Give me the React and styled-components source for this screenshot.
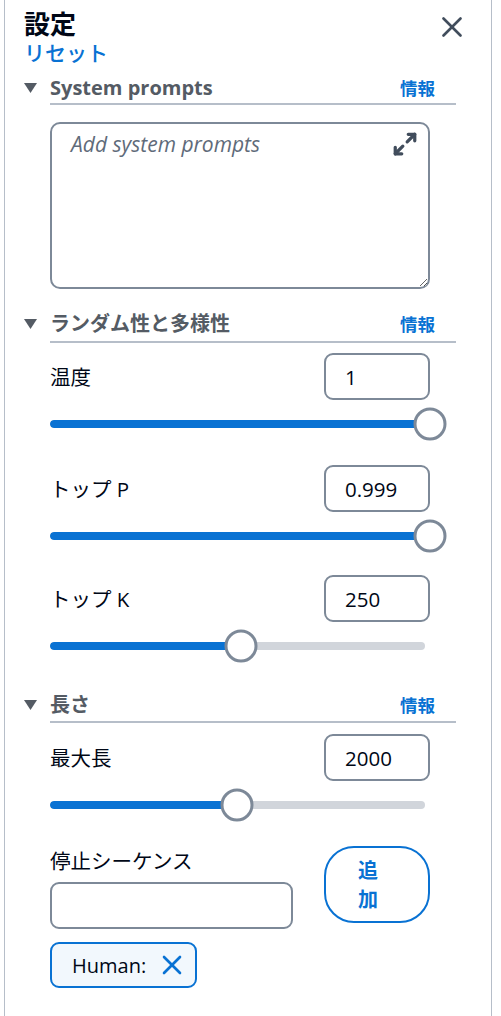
import React from "react";
import styled, { createGlobalStyle } from "styled-components";

const BLUE = "#0972d3";
const BORDER = "#7d8998";
const DIVIDER = "#b6bec9";

const Global = createGlobalStyle`
  html, body { margin: 0; padding: 0; background: #ffffff; }
  body {
    font-family: "Open Sans", "Noto Sans CJK JP", sans-serif;
    color: #000716;
  }
  * { box-sizing: border-box; }
`;

const Panel = styled.aside`
  margin-left: 4px;
  width: 488px;
  min-height: 1016px;
  border-left: 1px solid ${DIVIDER};
  border-right: 1px solid ${DIVIDER};
  padding: 8px 35px 20px 19px;
  display: flex;
  flex-direction: column;
`;

const TopBar = styled.header`
  display: flex;
  justify-content: space-between;
  align-items: flex-start;
`;

const TitleBlock = styled.div`
  display: flex;
  flex-direction: column;
  align-items: flex-start;
`;

const Title = styled.h2`
  margin: 0 0 0 0;
  font-size: 26px;
  line-height: 32px;
  font-weight: 700;
  color: #000716;
`;

const ResetLink = styled.button`
  margin: 1px 0 0 0;
  padding: 0;
  border: none;
  background: none;
  font-family: inherit;
  font-size: 21px;
  line-height: 24px;
  font-weight: 500;
  color: ${BLUE};
  cursor: pointer;
`;

const CloseButton = styled.button`
  margin: 9px -6px 0 0;
  padding: 0;
  border: none;
  background: none;
  width: 20px;
  height: 20px;
  display: flex;
  color: #414d5c;
`;

const SectionHead = styled.div`
  display: flex;
  align-items: flex-start;
  margin-top: ${(p) => p.$mt}px;
`;

const Caret = styled.svg`
  flex: none;
  width: 13px;
  height: 10px;
  margin: 7px 13px 0 0;
  fill: #545b64;
`;

const HeadBody = styled.div`
  flex: 1;
  display: flex;
  justify-content: space-between;
  align-items: center;
  padding-bottom: ${(p) => p.$pb}px;
  border-bottom: 2px solid ${DIVIDER};
`;

const HeadTitle = styled.h3`
  margin: 0;
  font-size: 20px;
  line-height: 24px;
  font-weight: 700;
  color: #545b64;
`;

const InfoLink = styled.a`
  margin-right: 21px;
  font-size: 17.5px;
  line-height: 24px;
  font-weight: 700;
  color: ${BLUE};
  text-decoration: none;
`;

const PromptWrap = styled.div`
  position: relative;
  width: 380px;
  margin: 17px 0 0 26px;
`;

const PromptArea = styled.textarea`
  display: block;
  width: 380px;
  height: 167px;
  border: 2px solid ${BORDER};
  border-radius: 10px;
  padding: 6px 44px 6px 19px;
  font-family: inherit;
  font-size: 21px;
  line-height: 28px;
  resize: vertical;
  outline: none;
  &::placeholder {
    font-style: italic;
    color: #5f6b7a;
  }
`;

const ExpandIcon = styled.svg`
  position: absolute;
  top: 9px;
  right: 12px;
  width: 26px;
  height: 26px;
  stroke: #414d5c;
`;

const FieldRow = styled.div`
  display: flex;
  justify-content: space-between;
  align-items: center;
  width: 380px;
  margin: ${(p) => p.$mt}px 0 0 26px;
`;

const Label = styled.label`
  font-size: 20.5px;
  line-height: 26px;
  color: #000716;
`;

const NumberInput = styled.input`
  width: 106px;
  height: 47px;
  border: 2px solid ${BORDER};
  border-radius: 9px;
  padding: 0 0 0 19px;
  font-family: inherit;
  font-size: 20.5px;
  color: #000716;
  outline: none;
  background: #fff;
`;

const SliderWrap = styled.div`
  position: relative;
  width: 380px;
  height: 33px;
  margin: 7px 0 0 26px;
  display: flex;
  align-items: center;
`;

const Track = styled.div`
  width: 375px;
  height: 8px;
  border-radius: 4px;
  background: #d1d5db;
  overflow: hidden;
`;

const Fill = styled.div`
  height: 100%;
  background: ${BLUE};
  border-radius: 4px;
`;

const Thumb = styled.div`
  position: absolute;
  top: 50%;
  width: 33px;
  height: 33px;
  border-radius: 50%;
  border: 3px solid ${BORDER};
  background: #ffffff;
  transform: translate(-50%, -50%);
`;

const StopRow = styled.div`
  display: flex;
  justify-content: space-between;
  align-items: flex-start;
  width: 380px;
  margin: 25px 0 0 26px;
`;

const StopColumn = styled.div`
  display: flex;
  flex-direction: column;
  padding-top: 2px;
`;

const TextInput = styled.input`
  width: 243px;
  height: 47px;
  margin-top: 8px;
  border: 2px solid ${BORDER};
  border-radius: 9px;
  padding: 0 19px;
  font-family: inherit;
  font-size: 20px;
  outline: none;
`;

const AddButton = styled.button`
  width: 106px;
  height: 77px;
  border: 2px solid ${BLUE};
  border-radius: 30px;
  background: #ffffff;
  padding: 0 50px 0 32px;
  text-align: left;
  font-family: inherit;
  font-size: 20px;
  line-height: 29px;
  font-weight: 700;
  color: ${BLUE};
  word-break: break-all;
  cursor: pointer;
`;

const Chip = styled.div`
  display: inline-flex;
  align-items: center;
  align-self: flex-start;
  gap: 16px;
  height: 46px;
  margin: 13px 0 0 26px;
  padding: 0 13px 0 20px;
  border: 2px solid ${BLUE};
  border-radius: 9px;
  background: #f2f8fd;
  font-size: 20px;
  color: #000716;
`;

const ChipRemove = styled.button`
  display: flex;
  padding: 0;
  border: none;
  background: none;
  color: ${BLUE};
`;

const CaretDown = () => (
  <Caret viewBox="0 0 13 10">
    <polygon points="0,0 13,0 6.5,10" />
  </Caret>
);

const Section = ({ title, mt, pb }) => (
  <SectionHead $mt={mt}>
    <CaretDown />
    <HeadBody $pb={pb}>
      <HeadTitle>{title}</HeadTitle>
      <InfoLink href="#">情報</InfoLink>
    </HeadBody>
  </SectionHead>
);

const Slider = ({ value, min, max }) => {
  const pct = (value - min) / (max - min);
  const pos = 2 + pct * 378;
  return (
    <SliderWrap>
      <Track>
        <Fill style={{ width: `${pos}px` }} />
      </Track>
      <Thumb style={{ left: `${pos}px` }} />
    </SliderWrap>
  );
};

const NumberField = ({ label, value, min, max, mt }) => (
  <>
    <FieldRow $mt={mt}>
      <Label>{label}</Label>
      <NumberInput defaultValue={value} />
    </FieldRow>
    <Slider value={Number(value)} min={min} max={max} />
  </>
);

export default function App() {
  return (
    <>
      <Global />
      <Panel>
        <TopBar>
          <TitleBlock>
            <Title>設定</Title>
            <ResetLink>リセット</ResetLink>
          </TitleBlock>
          <CloseButton aria-label="閉じる">
            <svg width="20" height="20" viewBox="0 0 20 20" fill="none" stroke="currentColor" strokeWidth="2.6" strokeLinecap="round">
              <line x1="1.5" y1="1.5" x2="18.5" y2="18.5" />
              <line x1="18.5" y1="1.5" x2="1.5" y2="18.5" />
            </svg>
          </CloseButton>
        </TopBar>

        <Section title="System prompts" mt={11} pb={3} />
        <PromptWrap>
          <PromptArea placeholder="Add system prompts" />
          <ExpandIcon viewBox="0 0 24 24" fill="none" strokeWidth="3" strokeLinecap="round" strokeLinejoin="round">
            <polyline points="15 3 21 3 21 9" />
            <polyline points="9 21 3 21 3 15" />
            <line x1="21" y1="3" x2="14" y2="10" />
            <line x1="3" y1="21" x2="10" y2="14" />
          </ExpandIcon>
        </PromptWrap>

        <Section title="ランダム性と多様性" mt={23} pb={5} />
        <NumberField label="温度" value="1" min={0} max={1} mt={10} />
        <NumberField label="トップ P" value="0.999" min={0} max={0.999} mt={25} />
        <NumberField label="トップ K" value="250" min={0} max={500} mt={23} />

        <Section title="長さ" mt={31} pb={4} />
        <NumberField label="最大長" value="2000" min={0} max={4096} mt={11} />

        <StopRow>
          <StopColumn>
            <Label>停止シーケンス</Label>
            <TextInput />
          </StopColumn>
          <AddButton>追加</AddButton>
        </StopRow>
        <Chip>
          <span>Human:</span>
          <ChipRemove aria-label="削除">
            <svg width="20" height="20" viewBox="0 0 20 20" fill="none" stroke="currentColor" strokeWidth="2.6" strokeLinecap="round">
              <line x1="2" y1="2" x2="18" y2="18" />
              <line x1="18" y1="2" x2="2" y2="18" />
            </svg>
          </ChipRemove>
        </Chip>
      </Panel>
    </>
  );
}
